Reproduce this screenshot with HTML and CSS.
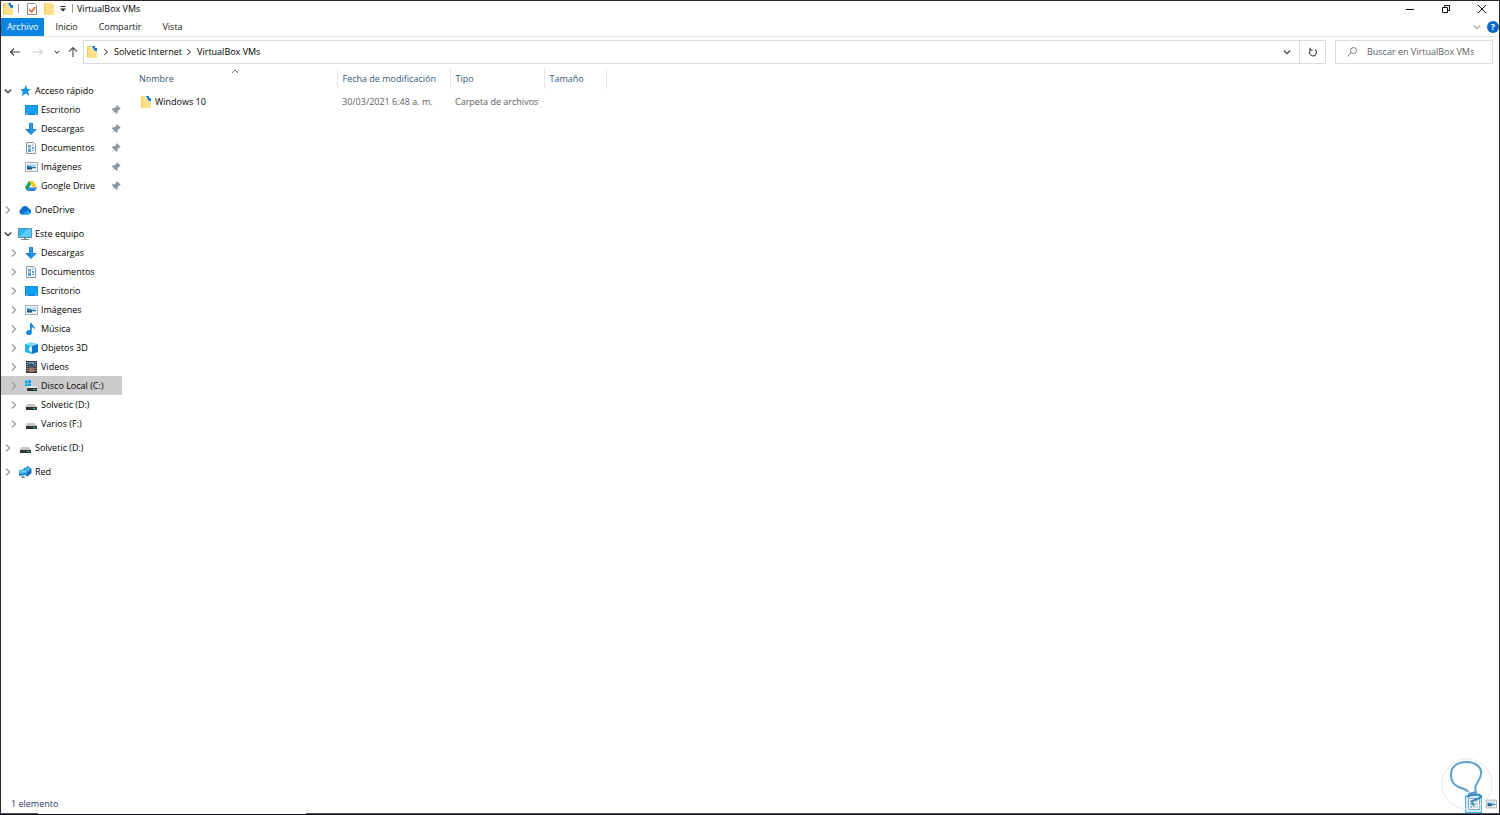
FILE: index.html
```html
<!DOCTYPE html>
<html lang="es">
<head>
    <meta charset="UTF-8">
    <meta name="viewport" content="width=device-width, initial-scale=1.0">
    <title>VirtualBox VMs</title>
    <link rel="stylesheet" href="styles.css">
</head>
<body>

    <!-- Icon definitions -->
    <svg class="sprite" aria-hidden="true">
        <symbol id="i-folder" viewBox="0 0 14 14">
            <path d="M2 1h8l2 2v10H3l-1-1z" fill="#ffe08a"/>
            <path d="M2 1h1.500v12L2 12z" fill="#f5cb62"/>
        </symbol>
        <symbol id="i-folder-doc" viewBox="0 0 14 14">
            <path d="M2 1h5l5 5v7H3l-1-1z" fill="#ffe08a"/>
            <path d="M2 1h1.500v12L2 12z" fill="#f5cb62"/>
            <path d="M6 1h2.500L12 5v2.500L9.500 6z" fill="#d9ecfb"/>
            <path d="M7 1h3v2h2v3h-2L8.500 4z" fill="#1979ca"/>
        </symbol>
        <symbol id="i-check-doc" viewBox="0 0 14 14">
            <path d="M2.500 1.500h7l2 2v9h-9z" fill="#fff" stroke="#8c8c8c"/>
            <path d="M4 7l2.500 3L10 5" fill="none" stroke="#e0662f" stroke-width="1.500"/>
        </symbol>
        <symbol id="i-right" viewBox="0 0 14 14">
            <path d="M5 3.500L8.500 7 5 10.500" fill="none" stroke="currentColor" stroke-width="1.200"/>
        </symbol>
        <symbol id="i-down" viewBox="0 0 14 14">
            <path d="M3.800 5.500L7 8.700l3.200-3.200" fill="none" stroke="currentColor" stroke-width="1.300"/>
        </symbol>
        <symbol id="i-pin" viewBox="0 0 14 14">
            <path d="M8.500 1.500L12.500 5.500l-1 .9-.7-.1-2 2.200.1 2.200-1.100 1.100-2.700-2.700L2 12l2.600-3.400L2 6l1.100-1.100 2.200.1 2.200-2-.1-.7z" fill="#8f979e"/>
        </symbol>
        <symbol id="i-star" viewBox="0 0 14 14">
            <path d="M8 1l1.300 3.900 3.900.1-3.200 2.500 1.300 4.500-3.500-2.400L3.600 12.500l1.200-4.400L2.300 5.200l3.900-.4z" fill="#1a94ea"/>
        </symbol>
        <symbol id="i-desktop" viewBox="0 0 14 14">
            <path d="M1 2h13v10H1z" fill="#0d7fd6"/>
            <path d="M1.500 2.500h12v8h-12z" fill="#12a0f5"/>
            <path d="M2 11h2M11 11h2" stroke="#bfe4ff"/>
        </symbol>
        <symbol id="i-download" viewBox="0 0 14 14">
            <path d="M5 1h4v6h4l-6 6-6-6h4z" fill="#1b84d6"/>
            <path d="M6 1.500h2v6h3L7 11.500z" fill="#2c9beb"/>
        </symbol>
        <symbol id="i-document" viewBox="0 0 14 14">
            <path d="M2.500 1.500h7l2 2v9h-9z" fill="#f8fafb" stroke="#8d9499"/>
            <path d="M4 4h3v2H4zM8 6h2v2H8zM4 8h3v3H4z" fill="#4ba6da"/>
            <path d="M8 4h1.500M4 7h3M8 9.500h2" stroke="#6b98b3"/>
        </symbol>
        <symbol id="i-image" viewBox="0 0 14 14">
            <path d="M1.500 2.500h12v9h-12z" fill="#fafafa" stroke="#a3a9ad"/>
            <path d="M3 4h9v6H3z" fill="#b9def5"/>
            <path d="M3 5.500l3 .5 3 1h3v1.500H3z" fill="#2873a8"/>
            <path d="M3 8.500c2-.5 5 0 9 0V10H3z" fill="#e8eef1"/>
            <path d="M3 8h5v1.500H3z" fill="#294e63"/>
        </symbol>
        <symbol id="i-drive" viewBox="0 0 14 14">
            <path d="M5 2h4l4 6.500H9.300z" fill="#fdc60a"/>
            <path d="M5 2l2 3.300L3.200 12 1 8.500z" fill="#11a15e"/>
            <path d="M5.200 8.500H13L11 12H3.200z" fill="#3b7fe8"/>
        </symbol>
        <symbol id="i-cloud" viewBox="0 0 14 14">
            <path d="M3.500 11.500A3 3 0 0 1 3 6 4 4 0 0 1 10.500 5.300 3.200 3.200 0 0 1 11 11.500z" fill="#0a6fcb"/>
            <path d="M3.500 11.500L10 7.300a2.700 2.700 0 0 1 1 4.200z" fill="#1fa0ee"/>
        </symbol>
        <symbol id="i-computer" viewBox="0 0 14 14">
            <path d="M.5 1.500h13v9H.5z" fill="#35b6f4" stroke="#5e8fa9"/>
            <path d="M1 10L10 2h3v8z" fill="#5ecbfb"/>
            <path d="M6 11h2v1H6zM3 12h8v1H3z" fill="#7c8d97"/>
        </symbol>
        <symbol id="i-music" viewBox="0 0 14 14">
            <path d="M6 1h1.500c.5 2.500 4 3 3.500 7-.5-1.800-1.500-2.500-3.200-2.800V10.500a2.800 2.500 0 1 1-1.800-2.300z" fill="#1687dc"/>
        </symbol>
        <symbol id="i-cube" viewBox="0 0 14 14">
            <path d="M1 3l6-2 7 2-6 2z" fill="#7edcfb"/>
            <path d="M1 3l7 2v8l-7-2z" fill="#26b3e8"/>
            <path d="M8 5l6-2v8l-6 2z" fill="#0a78c8"/>
            <path d="M5 6l3-.5V11l-3-1z" fill="#d6f5ff"/>
        </symbol>
        <symbol id="i-video" viewBox="0 0 14 14">
            <path d="M2 1h11v12H2z" fill="#33383d"/>
            <path d="M4.500 2h6v4.500h-6z" fill="#6b9dc4"/>
            <path d="M4.500 7.500h6V12h-6z" fill="#9c7461"/>
            <path d="M4.500 5l3-2 3 3v.5h-6z" fill="#294d70"/>
            <path d="M3.200 2v10M11.800 2v10" stroke="#d0d4d7" stroke-dasharray="1 1"/>
        </symbol>
        <symbol id="i-disk" viewBox="0 0 14 14">
            <path d="M3.500 6h7L13 9H1z" fill="#c3c6c8"/>
            <path d="M2 9h11v3H2z" fill="#303438"/>
            <path d="M9.500 10.500h2" stroke="#42dc68"/>
        </symbol>
        <symbol id="i-disk-win" viewBox="0 0 14 14">
            <path d="M5 7h6l2 2.500H2z" fill="#e0e3e5"/>
            <path d="M3 9h10v3H3z" fill="#303438"/>
            <path d="M9.500 10.500h2" stroke="#42dc68"/>
            <path d="M1 1.500h2.500V4H1zM4 1h3v3H4zM1 4.500h2.500V7H1zM4 4.500h3V7H4z" fill="#0ba5ee"/>
        </symbol>
        <symbol id="i-network" viewBox="0 0 14 14">
            <path d="M5 4l5-3 3.500 3v4L9 12z" fill="#1671b5"/>
            <path d="M7 3.500l3-2 2.500 2.500-3 3z" fill="#49b9ec"/>
            <path d="M1 5l8-1v6l-8 1z" fill="#2595d8"/>
            <path d="M1.500 5.500L8.500 4.800v2.700l-7 .5z" fill="#68cbf6"/>
            <path d="M4 11h2.500l.5 2H3z" fill="#7793a2"/>
        </symbol>
        <symbol id="i-details" viewBox="0 0 14 14">
            <path d="M1.500 1.500h11v11h-11z" fill="#f8fafb" stroke="#8fa9b8"/>
            <path d="M3 4h2M3 7h2M3 10h2" stroke="#2e7eb2"/>
            <path d="M6 4h5M6 7h5M6 10h5" stroke="#93a5ae"/>
        </symbol>
    </svg>

    <div class="window">

        <!-- Title bar -->
        <header class="titlebar">
            <svg class="icon"><use href="#i-folder-doc"/></svg>
            <span class="separator"></span>
            <button class="quick" aria-label="Propiedades"><svg class="icon"><use href="#i-check-doc"/></svg></button>
            <button class="quick" aria-label="Nueva carpeta"><svg class="icon"><use href="#i-folder"/></svg></button>
            <button class="quick-more" aria-label="Personalizar">
                <svg width="8" height="8" viewBox="0 0 8 8"><path d="M1.500 1.500h5" stroke="#222"/><path d="M1 3.500h6l-3 3z" fill="#222"/></svg>
            </button>
            <span class="separator"></span>
            <h1 class="title">VirtualBox VMs</h1>
            <div class="window-controls">
                <button aria-label="Minimizar"><svg width="10" height="10" viewBox="0 0 10 10"><path d="M1 5.500h8" stroke="#111"/></svg></button>
                <button aria-label="Restaurar"><svg width="10" height="10" viewBox="0 0 10 10"><path d="M1.500 3.500h5v5h-5zM3.500 3V1.500h5v5H7" fill="none" stroke="#111"/></svg></button>
                <button aria-label="Cerrar"><svg width="10" height="10" viewBox="0 0 10 10"><path d="M1 1l8 8M9 1L1 9" stroke="#111"/></svg></button>
            </div>
        </header>

        <!-- Ribbon tabs -->
        <nav class="tabs">
            <button class="tab active">Archivo</button>
            <button class="tab">Inicio</button>
            <button class="tab">Compartir</button>
            <button class="tab">Vista</button>
            <div class="tabs-right">
                <button class="muted" aria-label="Expandir la cinta"><svg class="icon"><use href="#i-down"/></svg></button>
                <button class="help" aria-label="Ayuda">?</button>
            </div>
        </nav>

        <!-- Address bar -->
        <div class="toolbar">
            <div class="history">
                <button aria-label="Atrás"><svg class="icon" viewBox="0 0 14 14"><path d="M12 7H2.500M6 3.500L2.500 7 6 10.500" fill="none" stroke="#444" stroke-width="1.200"/></svg></button>
                <button aria-label="Adelante"><svg class="icon" viewBox="0 0 14 14"><path d="M2 7h9.500M8 3.500L11.500 7 8 10.500" fill="none" stroke="#c4c4c4"/></svg></button>
                <button class="recent" aria-label="Ubicaciones recientes"><svg width="10" height="10"><use href="#i-down"/></svg></button>
                <button aria-label="Arriba"><svg class="icon" viewBox="0 0 14 14"><path d="M7 12V2.500M3 6.500l4-4 4 4" fill="none" stroke="#555" stroke-width="1.200"/></svg></button>
            </div>
            <div class="address">
                <svg class="icon"><use href="#i-folder-doc"/></svg>
                <svg class="crumb-arrow"><use href="#i-right"/></svg>
                <a href="#">Solvetic Internet</a>
                <svg class="crumb-arrow"><use href="#i-right"/></svg>
                <a href="#">VirtualBox VMs</a>
                <button class="address-drop" aria-label="Ubicaciones anteriores"><svg class="icon"><use href="#i-down"/></svg></button>
                <button class="refresh" aria-label="Actualizar">
                    <svg width="10" height="10" viewBox="0 0 10 10"><path d="M7 2.500A3.500 3.500 0 1 1 3.200 2.300M2 .8v2.500h2.700" fill="none" stroke="#444" stroke-width="1.100"/></svg>
                </button>
            </div>
            <label class="search">
                <svg class="icon" viewBox="0 0 14 14"><circle cx="8.500" cy="5.500" r="3" fill="none" stroke="#777"/><path d="M6.200 7.800L2.500 11.500" stroke="#777"/></svg>
                <input type="text" placeholder="Buscar en VirtualBox VMs" aria-label="Buscar en VirtualBox VMs">
            </label>
        </div>

        <div class="content">

            <!-- Navigation pane -->
            <nav class="sidebar">
                <ul class="group">
                    <li class="row open"><button aria-label="Contraer"><svg class="icon"><use href="#i-down"/></svg></button><svg class="icon"><use href="#i-star"/></svg><a href="#">Acceso rápido</a></li>
                    <li class="row child"><span class="no-toggle"></span><svg class="icon"><use href="#i-desktop"/></svg><a href="#">Escritorio</a><svg class="pin"><use href="#i-pin"/></svg></li>
                    <li class="row child"><span class="no-toggle"></span><svg class="icon"><use href="#i-download"/></svg><a href="#">Descargas</a><svg class="pin"><use href="#i-pin"/></svg></li>
                    <li class="row child"><span class="no-toggle"></span><svg class="icon"><use href="#i-document"/></svg><a href="#">Documentos</a><svg class="pin"><use href="#i-pin"/></svg></li>
                    <li class="row child"><span class="no-toggle"></span><svg class="icon"><use href="#i-image"/></svg><a href="#">Imágenes</a><svg class="pin"><use href="#i-pin"/></svg></li>
                    <li class="row child"><span class="no-toggle"></span><svg class="icon"><use href="#i-drive"/></svg><a href="#">Google Drive</a><svg class="pin"><use href="#i-pin"/></svg></li>
                </ul>
                <ul class="group">
                    <li class="row"><button aria-label="Expandir"><svg class="icon"><use href="#i-right"/></svg></button><svg class="icon"><use href="#i-cloud"/></svg><a href="#">OneDrive</a></li>
                </ul>
                <ul class="group">
                    <li class="row open"><button aria-label="Contraer"><svg class="icon"><use href="#i-down"/></svg></button><svg class="icon"><use href="#i-computer"/></svg><a href="#">Este equipo</a></li>
                    <li class="row child"><button aria-label="Expandir"><svg class="icon"><use href="#i-right"/></svg></button><svg class="icon"><use href="#i-download"/></svg><a href="#">Descargas</a></li>
                    <li class="row child"><button aria-label="Expandir"><svg class="icon"><use href="#i-right"/></svg></button><svg class="icon"><use href="#i-document"/></svg><a href="#">Documentos</a></li>
                    <li class="row child"><button aria-label="Expandir"><svg class="icon"><use href="#i-right"/></svg></button><svg class="icon"><use href="#i-desktop"/></svg><a href="#">Escritorio</a></li>
                    <li class="row child"><button aria-label="Expandir"><svg class="icon"><use href="#i-right"/></svg></button><svg class="icon"><use href="#i-image"/></svg><a href="#">Imágenes</a></li>
                    <li class="row child"><button aria-label="Expandir"><svg class="icon"><use href="#i-right"/></svg></button><svg class="icon"><use href="#i-music"/></svg><a href="#">Música</a></li>
                    <li class="row child"><button aria-label="Expandir"><svg class="icon"><use href="#i-right"/></svg></button><svg class="icon"><use href="#i-cube"/></svg><a href="#">Objetos 3D</a></li>
                    <li class="row child"><button aria-label="Expandir"><svg class="icon"><use href="#i-right"/></svg></button><svg class="icon"><use href="#i-video"/></svg><a href="#">Videos</a></li>
                    <li class="row child selected"><button aria-label="Expandir"><svg class="icon"><use href="#i-right"/></svg></button><svg class="icon"><use href="#i-disk-win"/></svg><a href="#">Disco Local (C:)</a></li>
                    <li class="row child"><button aria-label="Expandir"><svg class="icon"><use href="#i-right"/></svg></button><svg class="icon"><use href="#i-disk"/></svg><a href="#">Solvetic (D:)</a></li>
                    <li class="row child"><button aria-label="Expandir"><svg class="icon"><use href="#i-right"/></svg></button><svg class="icon"><use href="#i-disk"/></svg><a href="#">Varios (F:)</a></li>
                </ul>
                <ul class="group">
                    <li class="row"><button aria-label="Expandir"><svg class="icon"><use href="#i-right"/></svg></button><svg class="icon"><use href="#i-disk"/></svg><a href="#">Solvetic (D:)</a></li>
                </ul>
                <ul class="group">
                    <li class="row"><button aria-label="Expandir"><svg class="icon"><use href="#i-right"/></svg></button><svg class="icon"><use href="#i-network"/></svg><a href="#">Red</a></li>
                </ul>
            </nav>

            <!-- File list -->
            <main class="files">
                <table>
                    <thead>
                        <tr>
                            <th class="col-name">Nombre
                                <svg class="sort" width="8" height="5" viewBox="0 0 8 5"><path d="M1 4l3-3 3 3" fill="none" stroke="#777"/></svg>
                            </th>
                            <th class="col-date">Fecha de modificación</th>
                            <th class="col-type">Tipo</th>
                            <th class="col-size">Tamaño</th>
                        </tr>
                    </thead>
                    <tbody>
                        <tr>
                            <td><a class="file" href="#"><svg class="icon"><use href="#i-folder-doc"/></svg>Windows 10</a></td>
                            <td>30/03/2021 6:48 a. m.</td>
                            <td>Carpeta de archivos</td>
                            <td></td>
                        </tr>
                    </tbody>
                </table>
            </main>
        </div>

        <!-- Status bar -->
        <footer class="status">
            <span>1 elemento</span>
            <div class="views">
                <button class="view current" aria-label="Detalles"><svg class="icon"><use href="#i-details"/></svg></button>
                <button class="view" aria-label="Iconos grandes"><svg width="12" height="12"><use href="#i-image"/></svg></button>
            </div>
            <svg class="watermark" width="52" height="54" viewBox="0 0 52 54" aria-hidden="true">
                <circle cx="26" cy="27" r="25" fill="none" stroke="#e3e7f6"/>
                <path d="M27 35C26 30 10 33 10 18 10 9 17 5 26 5c8 0 15 5 14 12-1 9-8 10-5 18l-8 2" fill="none" stroke="#5b9fcb" stroke-width="2"/>
                <path d="M26 40c5-4 12-3 14-1-1 4-9 3-9 6 0 2 3 2 1 4" fill="none" stroke="#3a86b8" stroke-width="2"/>
            </svg>
        </footer>
        <div class="taskbar-edge"></div>
    </div>

</body>
</html>
```

FILE: styles.css
```css
* {
    box-sizing: border-box;
}
body {
    margin: 0;
    font-family: "Open Sans", "Noto Sans", sans-serif;
    font-size: 9px;
    line-height: 14px;
    color: #000;
    background-color: #fff;
}
button {
    display: flex;
    align-items: center;
    justify-content: center;
    padding: 0;
    border: none;
    background: none;
    color: inherit;
    font: inherit;
}
a {
    color: inherit;
    text-decoration: none;
    white-space: nowrap;
}
ul {
    list-style: none;
    margin: 0;
    padding: 0;
}
.sprite {
    display: none;
}
.icon {
    width: 14px;
    height: 14px;
    flex: none;
}
.window {
    display: flex;
    flex-direction: column;
    min-height: 100vh;
    border: 1px solid #2a272b;
    border-bottom: none;
}

/* Title bar */
.titlebar {
    display: flex;
    align-items: center;
    height: 17px;
    padding-bottom: 2px;
}
.separator {
    width: 1px;
    height: 9px;
    margin: 0 4px 0 3px;
    background-color: #999;
}
.quick {
    width: 17px;
}
.quick-more {
    width: 12px;
}
.title {
    margin: 0;
    font-size: 9px;
    font-weight: 400;
}
.window-controls {
    display: flex;
    margin: 0 -1px 0 auto;
}
.window-controls button {
    width: 36px;
    height: 15px;
}

/* Ribbon tabs */
.tabs {
    display: flex;
    gap: 1px;
    height: 19px;
    border-bottom: 1px solid #e6e6e6;
}
.tab {
    height: 18px;
    padding: 0 10px;
    color: #222;
}
.tab.active {
    padding: 0 6px;
    background-color: #0a84e3;
    color: #fff;
}
.tabs-right {
    display: flex;
    align-items: center;
    gap: 3px;
    margin-left: auto;
}
.muted {
    color: #aaa;
}
.help {
    width: 12px;
    height: 12px;
    border-radius: 50%;
    background-color: #0968c3;
    color: #fff;
    font-weight: 700;
}

/* Address bar */
.toolbar {
    display: flex;
    gap: 9px;
    padding: 3px 6px 5px 7px;
}
.history {
    display: flex;
    align-items: center;
    gap: 9px;
    margin-right: -6px;
}
.history .recent {
    width: 10px;
    margin: 0 -5px 0 -2px;
}
.address {
    display: flex;
    flex: 1;
    align-items: center;
    height: 24px;
    padding-left: 1px;
    border: 1px solid #dcdcdc;
}
.crumb-arrow {
    width: 12px;
    height: 12px;
    margin: 0 2px 0 1px;
    color: #444;
}
.address-drop {
    width: 24px;
    height: 22px;
    margin-left: auto;
    color: #444;
}
.refresh {
    width: 26px;
    height: 22px;
    border-left: 1px solid #dcdcdc;
}
.search {
    display: flex;
    align-items: center;
    gap: 8px;
    width: 158px;
    height: 24px;
    padding-left: 9px;
    border: 1px solid #dcdcdc;
}
.search input {
    flex: 1;
    min-width: 0;
    padding: 0;
    border: none;
    outline: none;
    font: inherit;
}
.search input::placeholder {
    color: #606060;
}

/* Navigation pane */
.content {
    display: flex;
    flex: 1;
}
.sidebar {
    width: 121px;
    padding-top: 12px;
}
.group {
    margin-bottom: 5px;
}
.row {
    display: flex;
    align-items: center;
    gap: 3px;
    height: 19px;
}
.row button {
    color: #999;
}
.row.open button {
    color: #333;
}
.row.child {
    padding-left: 6px;
}
.row.selected {
    background-color: #ccc;
}
.no-toggle {
    width: 14px;
}
.pin {
    width: 12px;
    height: 12px;
    margin-left: auto;
}

/* File list */
.files {
    flex: 1;
    padding-left: 12px;
}
table {
    border-collapse: collapse;
    table-layout: fixed;
    width: 472px;
}
th, td {
    padding: 0 0 0 5px;
    text-align: left;
    font-weight: 400;
    white-space: nowrap;
}
th {
    position: relative;
    height: 20px;
    border-right: 1px solid #e5e5e5;
    color: #365878;
}
td {
    height: 26px;
    color: #606060;
}
.col-name {
    width: 203px;
}
.col-date {
    width: 113px;
}
.col-type {
    width: 94px;
}
.col-size {
    width: 62px;
}
.sort {
    position: absolute;
    top: 0;
    left: 50%;
    margin-left: -4px;
}
.file {
    display: flex;
    align-items: center;
    gap: 2px;
    color: #000;
}

/* Status bar */
.status {
    position: relative;
    display: flex;
    align-items: center;
    justify-content: space-between;
    height: 18px;
    padding-left: 10px;
    color: #1e395b;
}
.views {
    display: flex;
}
.view {
    width: 17px;
    height: 18px;
}
.view.current {
    border: 1px solid #4fb8ea;
    background-color: #cdeafa;
}
.watermark {
    position: absolute;
    right: 6px;
    bottom: 2px;
}
.taskbar-edge {
    height: 2px;
    margin: 0 -1px;
    border-bottom: 1px solid #120e1a;
    background: linear-gradient(to right, #555 38px, #fff 38px, #fff 306px, #555 306px);
}
```
